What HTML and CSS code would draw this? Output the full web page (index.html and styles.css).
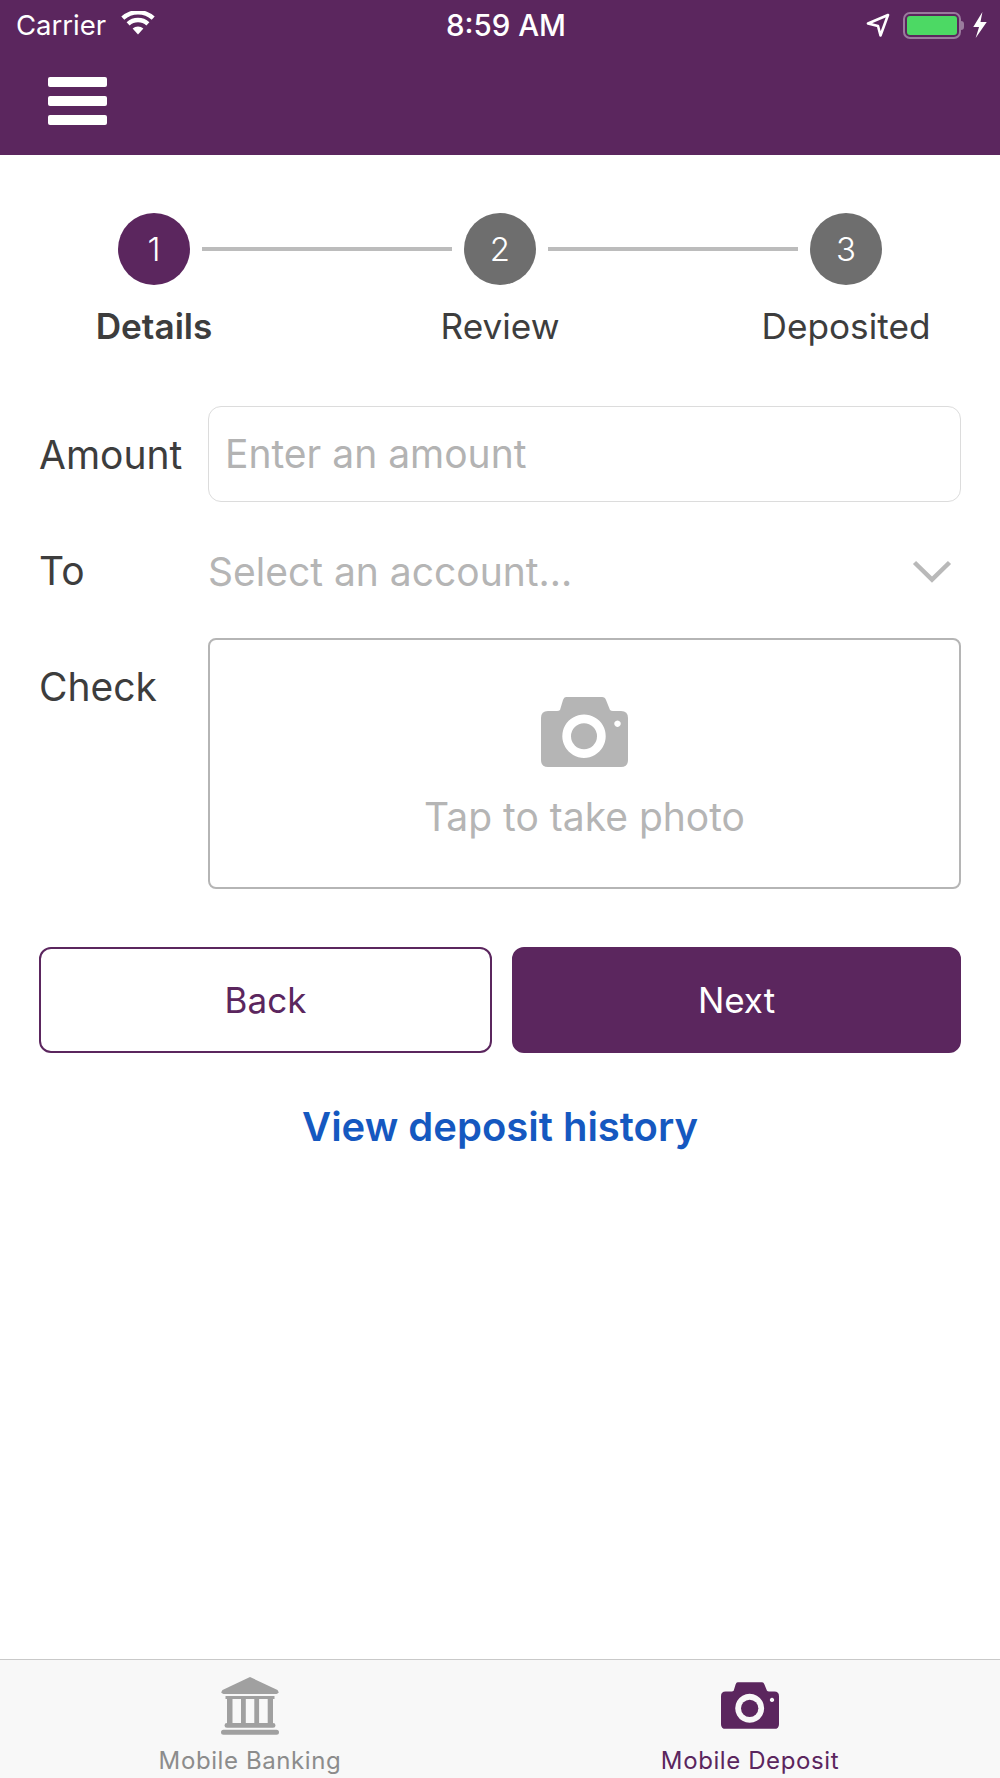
FILE: index.html
```html
<!DOCTYPE html>
<html lang="en">
<head>
<meta charset="utf-8">
<title>Mobile Deposit</title>
<link rel="stylesheet" href="styles.css">
</head>
<body>
<div class="app">
  <header class="topbar">
    <div class="status">
      <div class="status-left">
        <span class="carrier">Carrier</span>
        <svg class="wifi" viewBox="0 0 34 24"><path d="M17 23.500 11.600 17.600a8 8 0 0 1 10.800 0Z"/><path d="M8.600 14.400 5.600 11.200a17 17 0 0 1 22.800 0l-3 3.200a12.600 12.600 0 0 0-16.800 0Z"/><path d="M3.300 8.700 0.300 5.500a25 25 0 0 1 33.400 0l-3 3.200a20.600 20.600 0 0 0-27.400 0Z"/></svg>
      </div>
      <div class="clock">8:59 AM</div>
      <div class="status-right">
        <svg class="loc" viewBox="0 0 24 24"><path d="M22 2 2 10.500 12 13l2.500 9.500Z" fill="none" stroke="#fff" stroke-width="2.600" stroke-linejoin="round"/></svg>
        <div class="battery"><div class="battery-fill"></div></div>
        <div class="battery-cap"></div>
        <svg class="bolt" viewBox="0 0 16 27"><path d="M10.500 0 1 15.500h6L3.500 27 15 10.500H8.500Z"/></svg>
      </div>
    </div>
    <div class="nav">
      <div class="burger"><span></span><span></span><span></span></div>
    </div>
  </header>

  <main class="content">
    <ol class="stepper">
      <li class="step active"><div class="dot">1</div><div class="step-label">Details</div></li>
      <li class="rail"></li>
      <li class="step"><div class="dot">2</div><div class="step-label">Review</div></li>
      <li class="rail"></li>
      <li class="step"><div class="dot">3</div><div class="step-label">Deposited</div></li>
    </ol>

    <div class="form">
      <div class="row row-amount">
        <div class="label">Amount</div>
        <div class="input">Enter an amount</div>
      </div>
      <div class="row row-to">
        <div class="label">To</div>
        <div class="select">
          <span>Select an account...</span>
          <svg class="chevron" viewBox="0 0 40 23"><path d="M2.500 2.500 20 19.500 37.500 2.500" fill="none" stroke="#b9b9b9" stroke-width="4.500"/></svg>
        </div>
      </div>
      <div class="row row-check">
        <div class="label">Check</div>
        <div class="photo">
          <svg class="camera" viewBox="0 0 87 70"><path fill-rule="evenodd" d="M25 0h36q3 0 4 3l4 10q1 1 3 1h8q7 0 7 7v42q0 7-7 7H7q-7 0-7-7V21q0-7 7-7h9q2 0 3-1l3-10q1-3 3-3Zm18 17.500a21.700 21.700 0 1 0 0.010 0Zm33.500 6a3.200 3.200 0 1 0 0.010 0Z"/><circle cx="43" cy="39.200" r="13"/></svg>
          <div class="photo-text">Tap to take photo</div>
        </div>
      </div>
    </div>

    <div class="actions">
      <button class="btn btn-back">Back</button>
      <button class="btn btn-next">Next</button>
    </div>
    <a class="history" href="#">View deposit history</a>
  </main>

  <nav class="tabbar">
    <div class="tab">
      <svg class="tab-icon bank" viewBox="0 0 58 58"><path d="M29 0 56.500 13q2.500 3-1 4H2.500q-3.500-1-1-4Z"/><path d="M4.500 19h49v3h-49ZM6 22h5.500v24H6ZM20 22h4.800v24H20ZM33.300 22h4.800v24h-4.800ZM46.700 22H52v24h-5.300ZM6 46h46q2.500 0 2.500 2.400T52 50.800H6q-2.500 0-2.500-2.400T6 46ZM2.500 52.800h53q2.500 0 2.500 2.500t-2.500 2.500h-53Q0 57.800 0 55.300t2.500-2.500Z"/></svg>
      <div class="tab-label">Mobile Banking</div>
    </div>
    <div class="tab current">
      <svg class="tab-icon cam" viewBox="0 0 87 70"><path fill-rule="evenodd" d="M25 0h36q3 0 4 3l4 10q1 1 3 1h8q7 0 7 7v42q0 7-7 7H7q-7 0-7-7V21q0-7 7-7h9q2 0 3-1l3-10q1-3 3-3Zm18 17.500a21.700 21.700 0 1 0 0.010 0Zm33.500 6a3.200 3.200 0 1 0 0.010 0Z"/><circle cx="43" cy="39.200" r="13"/></svg>
      <div class="tab-label">Mobile Deposit</div>
    </div>
  </nav>
</div>
</body>
</html>
```
FILE: styles.css
```css
* { box-sizing: border-box; }
html, body { margin: 0; padding: 0; background: #fff; }
body { font-family: Inter, "Liberation Sans", sans-serif; color: #3d3d3d; }
.app { width: 1000px; height: 1778px; display: flex; flex-direction: column; overflow: hidden; }

.topbar { height: 155px; background: #5b265e; color: #fff; flex: none; }
.status { height: 50px; display: grid; grid-template-columns: 1fr auto 1fr; align-items: center; padding: 0 12px 0 16px; }
.status-left { display: flex; align-items: center; gap: 15px; }
.carrier { font-size: 27.500px; }
.wifi { width: 34px; height: 24px; fill: #fff; margin-top: -4px; }
.clock { font-size: 29.500px; font-weight: 500; margin-left: 8px; }
.status-right { display: flex; align-items: center; justify-content: flex-end; }
.loc { width: 24px; height: 24px; margin-right: 13px; }
.battery { width: 58px; height: 27px; border: 2px solid #9a7b9d; border-radius: 7px; padding: 2px; }
.battery-fill { width: 100%; height: 100%; background: #4cd964; border-radius: 3px; }
.battery-cap { width: 3px; height: 9px; background: #9a7b9d; border-radius: 0 3px 3px 0; margin-right: 8px; }
.bolt { width: 16px; height: 26px; fill: #fff; }
.nav { padding: 27px 48px 0; }
.burger { width: 59px; display: flex; flex-direction: column; gap: 9px; }
.burger span { height: 10px; background: #fff; border-radius: 2px; }

.content { flex: 1; padding: 58px 39px 0 39px; }
.stepper { list-style: none; margin: 0 79px; padding: 0; display: flex; }
.step { width: 72px; flex: none; display: flex; flex-direction: column; align-items: center; }
.dot { width: 72px; height: 72px; border-radius: 50%; background: #6e6e6e; color: #fff; display: flex; align-items: center; justify-content: center; font-size: 33px; font-weight: 300; }
.step.active .dot { background: #5b265e; }
.step-label { margin-top: 19px; margin-bottom: 1px; font-size: 35.200px; line-height: 44px; white-space: nowrap; }
.step.active .step-label { font-weight: 600; }
.rail { flex: 1; height: 4px; margin: 34px 12px 0; background: #bcbcbc; }

.form { margin-top: 57px; display: flex; flex-direction: column; }
.row { display: grid; grid-template-columns: 169px 1fr; font-size: 39px; }
.label { line-height: 46px; font-size: 39px; white-space: nowrap; }
.row-amount .label { padding-top: 26px; }
.input { height: 96px; border: 1px solid #dcdcdc; border-radius: 13px; padding: 0 16px 2px; display: flex; align-items: center; color: #b3b3b3; }
.row-to { margin-top: 39px; height: 60px; align-items: center; }
.select { display: flex; align-items: center; justify-content: space-between; color: #b5b5b5; padding-right: 9px; }
.chevron { width: 40px; height: 23px; }
.row-check { margin-top: 37px; }
.row-check .label { padding-top: 26px; }
.photo { height: 251px; border: 2px solid #b5b5b5; border-radius: 8px; display: flex; flex-direction: column; align-items: center; padding-top: 57px; }
.camera { width: 87px; height: 70px; fill: #b5b5b5; }
.photo-text { margin-top: 27px; color: #b5b5b5; font-size: 39px; line-height: 46px; }

.actions { margin-top: 58px; display: grid; grid-template-columns: 453px 449px; gap: 20px; }
.btn { height: 106px; border-radius: 12px; font: inherit; font-size: 35px; border: 2px solid #5b265e; }
.btn-back { background: #fff; color: #5b265e; }
.btn-next { background: #5b265e; color: #fff; }
.history { display: block; margin-top: 49px; text-align: center; color: #1558c0; font-size: 40px; line-height: 50px; font-weight: 600; text-decoration: none; }

.tabbar { height: 119px; flex: none; border-top: 1px solid #c9c9c9; background: #f8f8f8; display: grid; grid-template-columns: 1fr 1fr; }
.tab { display: flex; flex-direction: column; align-items: center; }
.tab-icon { display: block; }
.tab.current { color: #5b265e; }
.bank { width: 58px; height: 58px; margin-top: 17px; fill: #a0a0a0; }
.cam { width: 58px; height: 47px; margin-top: 22px; margin-bottom: 6px; fill: #5b265e; }
.tab-label { font-size: 24px; line-height: 32px; letter-spacing: .6px; margin-top: 10px; color: #8c8c8c; white-space: nowrap; }
.tab.current .tab-label { color: #5b265e; }
```
